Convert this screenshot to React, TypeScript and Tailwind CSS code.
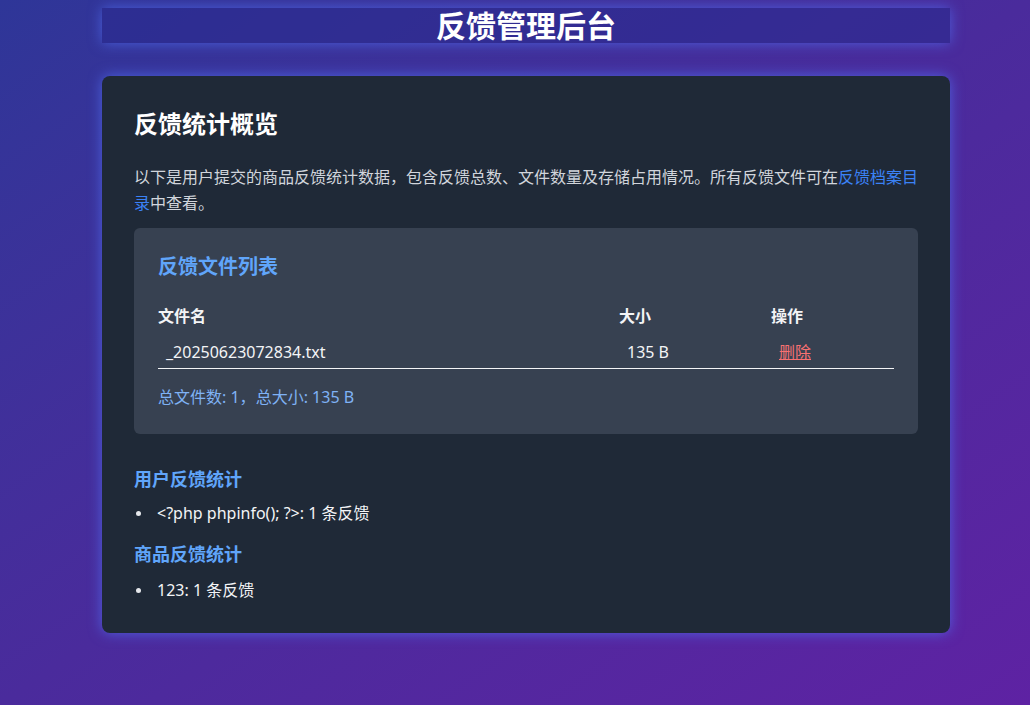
const FILES = [{ name: "_20250623072834.txt", size: "135 B" }];

const USER_STATS = [{ label: "<?php phpinfo(); ?>", count: 1 }];
const PRODUCT_STATS = [{ label: "123", count: 1 }];

function StatList({ items }: { items: { label: string; count: number }[] }) {
  return (
    <ul className="text-[16px] leading-6 text-gray-100">
      {items.map((s) => (
        <li key={s.label} className="flex items-center">
          <span className="mr-[16px] ml-[2px] h-[5px] w-[5px] rounded-full bg-gray-200" />
          <span>
            {s.label}: {s.count} 条反馈
          </span>
        </li>
      ))}
    </ul>
  );
}

export default function App() {
  return (
    <div
      className="min-h-[705px] bg-linear-to-br from-[#2e3698] via-[#4a2b9c] to-[#5e22a3] pt-2 pb-[72px] pl-[102px] text-gray-200"
      style={{ fontFamily: '"Noto Sans", "Noto Sans CJK SC", sans-serif' }}
    >
      {/* Header */}
      <header className="flex h-[35px] w-[848px] items-center justify-center bg-[#2a2a8e]/60 shadow-[0_0_14px_rgba(80,110,240,0.75)]">
        <h1 className="text-[30px] leading-[35px] font-bold text-white">反馈管理后台</h1>
      </header>

      {/* Card */}
      <main className="mt-[33px] w-[848px] rounded-lg bg-[#1f2937] px-8 pt-8 pb-[31px] shadow-[0_0_14px_rgba(80,110,240,0.8)]">
        <h2 className="text-[24px] leading-8 font-bold text-white">反馈统计概览</h2>
        <p className="mt-[23px] mr-[-2px] font-['Noto_Sans_CJK_SC',sans-serif] text-[16px] leading-[26px] text-gray-300">
          以下是用户提交的商品反馈统计数据，包含反馈总数、文件数量及存储占用情况。所有反馈文件可在
          <a href="#" className="text-[#3b82f6]">反馈档案目录</a>
          中查看。
        </p>

        {/* File list */}
        <section className="mt-[13px] rounded-md bg-[#374151] px-6 pt-[25px] pb-[25px]">
          <h3 className="text-[20px] leading-7 font-bold text-[#60a5fa]">反馈文件列表</h3>
          <table className="mt-[17px] w-[736px] table-fixed border-collapse text-[16px] leading-5">
            <thead>
              <tr>
                <th className="w-[461px] py-2 text-left font-bold text-gray-100">文件名</th>
                <th className="w-[152px] py-2 text-left font-bold text-gray-100">大小</th>
                <th className="py-2 text-left font-bold text-gray-100">操作</th>
              </tr>
            </thead>
            <tbody>
              {FILES.map((f) => (
                <tr key={f.name} className="border-b border-gray-100">
                  <td className="px-2 pt-2 pb-[6px] text-gray-100">{f.name}</td>
                  <td className="px-2 pt-2 pb-[6px] text-gray-100">{f.size}</td>
                  <td className="px-2 pt-2 pb-[6px]">
                    <a href="#" className="text-[#f87171] underline">删除</a>
                  </td>
                </tr>
              ))}
            </tbody>
          </table>
          <p className="mt-[15px] text-[16px] leading-6 text-[#7fb2f5]">
            总文件数: 1<span className="font-['Noto_Sans_CJK_SC',sans-serif]">，</span>总大小: 135 B
          </p>
        </section>

        {/* Stats */}
        <h3 className="mt-[32px] text-[18px] leading-[27px] font-bold text-[#60a5fa]">用户反馈统计</h3>
        <div className="mt-[8px]">
          <StatList items={USER_STATS} />
        </div>
        <h3 className="mt-4 text-[18px] leading-[27px] font-bold text-[#60a5fa]">商品反馈统计</h3>
        <div className="mt-[10px]">
          <StatList items={PRODUCT_STATS} />
        </div>
      </main>
    </div>
  );
}
